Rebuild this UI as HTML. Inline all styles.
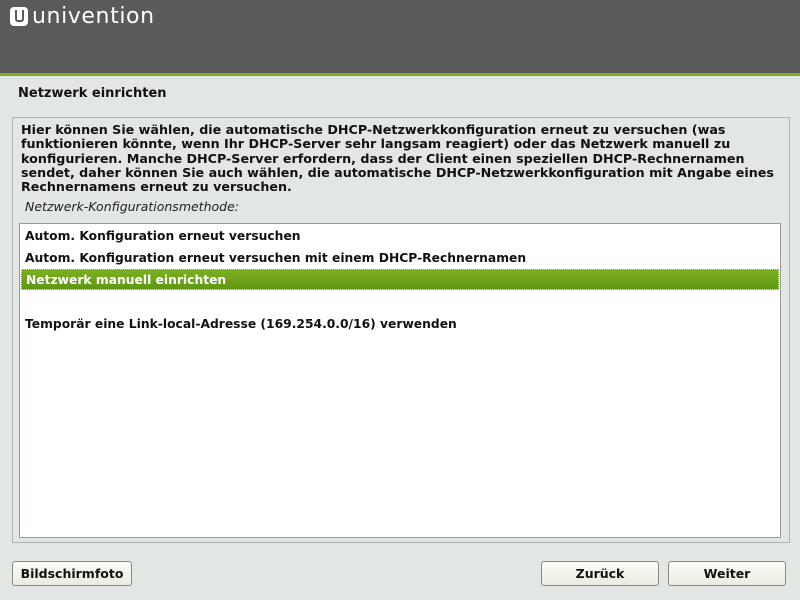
<!DOCTYPE html>
<html><head><style>
body{margin:0;width:800px;height:600px;background:#e3e7e3;font-family:"DejaVu Sans",sans-serif;position:relative;overflow:hidden}
.hdr{position:absolute;left:0;top:0;width:800px;height:73px;background:#5a5a5a;border-bottom:3px solid #7bb31e}
.logo{position:absolute;left:10px;top:4px;color:#fff;font-size:22px;font-family:"DejaVu Sans",sans-serif;letter-spacing:0.6px}
.logo .u{display:inline-block;width:18px;height:19px;background:#fff;border-radius:4px;vertical-align:-3px;margin-right:4px;position:relative}
.logo .u:after{content:"";position:absolute;left:5px;top:3px;width:5px;height:10px;border:2px solid #5a5a5a;border-top:none;border-radius:0 0 3px 3px}
.title{position:absolute;left:18px;top:86px;font-size:13px;font-weight:bold;color:#111}
.frame{position:absolute;left:12px;top:117px;width:776px;height:424px;border:1px solid #b0b4b0}
.desc{position:absolute;left:21px;top:123px;width:790px;font-size:12.7px;font-weight:bold;line-height:14.3px;color:#111;white-space:nowrap}
.lbl{position:absolute;left:25px;top:199px;font-size:12.5px;font-style:italic;color:#222}
.list{position:absolute;left:19px;top:223px;width:760px;height:313px;background:#fff;border:1px solid #999}
.it{position:absolute;left:1px;width:758px;height:21px;font-size:12.3px;font-weight:bold;line-height:23px;padding-left:4px;box-sizing:border-box;color:#111}
.sel{background:linear-gradient(#7cb021,#5f9713);color:#fff;border:1px dotted #cde;line-height:21px}
.btn{position:absolute;top:561px;height:25px;border:1px solid #8a8a80;border-radius:3px;background:linear-gradient(#fbfbf6,#ecebe3);font-size:12.5px;font-weight:bold;text-align:center;line-height:24px;color:#111;box-sizing:border-box}
</style></head><body>
<div class="hdr"><div class="logo"><span class="u"></span>univention</div></div>
<div class="title">Netzwerk einrichten</div>
<div class="frame"></div>
<div class="desc">Hier können Sie wählen, die automatische DHCP-Netzwerkkonfiguration erneut zu versuchen (was<br>funktionieren könnte, wenn Ihr DHCP-Server sehr langsam reagiert) oder das Netzwerk manuell zu<br>konfigurieren. Manche DHCP-Server erfordern, dass der Client einen speziellen DHCP-Rechnernamen<br>sendet, daher können Sie auch wählen, die automatische DHCP-Netzwerkkonfiguration mit Angabe eines<br>Rechnernamens erneut zu versuchen.</div>
<div class="lbl">Netzwerk-Konfigurationsmethode:</div>
<div class="list">
<div class="it" style="top:1px">Autom. Konfiguration erneut versuchen</div>
<div class="it" style="top:23px">Autom. Konfiguration erneut versuchen mit einem DHCP-Rechnernamen</div>
<div class="it sel" style="top:45px">Netzwerk manuell einrichten</div>
<div class="it" style="top:89px">Temporär eine Link-local-Adresse (169.254.0.0/16) verwenden</div>
</div>
<div class="btn" style="left:12px;width:120px">Bildschirmfoto</div>
<div class="btn" style="left:541px;width:118px">Zurück</div>
<div class="btn" style="left:668px;width:118px">Weiter</div>
</body></html>
